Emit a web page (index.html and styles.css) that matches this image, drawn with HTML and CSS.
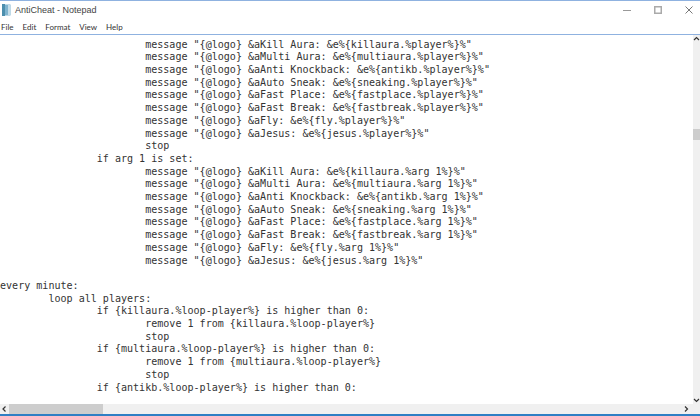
FILE: index.html
```html
<!DOCTYPE html>
<html lang="en">
<head>
<meta charset="utf-8">
<title>AntiCheat - Notepad</title>
<link rel="stylesheet" href="styles.css">
</head>
<body>
<div class="window">
  <header class="titlebar">
    <svg class="app-icon" width="9" height="12" viewBox="0 0 9 12"><rect x="0.5" y="0.5" width="8" height="11" fill="#7fb4cf"/><rect x="0" y="0" width="3" height="12" fill="#4d8fae"/><rect x="6" y="1" width="2" height="10" fill="#c4dde9"/></svg>
    <span class="title">AntiCheat - Notepad</span>
    <div class="controls">
      <svg width="8" height="8" viewBox="0 0 8 8"><path d="M0 4.5h8" stroke="#999" fill="none"/></svg>
      <svg width="8" height="8" viewBox="0 0 8 8"><rect x="0.75" y="0.75" width="6.5" height="6.5" stroke="#aaa" stroke-width="1.5" fill="none"/></svg>
      <svg width="8" height="8" viewBox="0 0 8 8"><path d="M0.5 0.5l7 7M7.5 0.5l-7 7" stroke="#777" fill="none"/></svg>
    </div>
  </header>
  <nav class="menubar"><span>File</span><span>Edit</span><span>Format</span><span>View</span><span>Help</span></nav>
  <main class="body">
    <div class="editor">
<pre class="text">			message "{@logo} &amp;aKill Aura: &amp;e%{killaura.%player%}%"
			message "{@logo} &amp;aMulti Aura: &amp;e%{multiaura.%player%}%"
			message "{@logo} &amp;aAnti Knockback: &amp;e%{antikb.%player%}%"
			message "{@logo} &amp;aAuto Sneak: &amp;e%{sneaking.%player%}%"
			message "{@logo} &amp;aFast Place: &amp;e%{fastplace.%player%}%"
			message "{@logo} &amp;aFast Break: &amp;e%{fastbreak.%player%}%"
			message "{@logo} &amp;aFly: &amp;e%{fly.%player%}%"
			message "{@logo} &amp;aJesus: &amp;e%{jesus.%player%}%"
			stop
		if arg 1 is set:
			message "{@logo} &amp;aKill Aura: &amp;e%{killaura.%arg 1%}%"
			message "{@logo} &amp;aMulti Aura: &amp;e%{multiaura.%arg 1%}%"
			message "{@logo} &amp;aAnti Knockback: &amp;e%{antikb.%arg 1%}%"
			message "{@logo} &amp;aAuto Sneak: &amp;e%{sneaking.%arg 1%}%"
			message "{@logo} &amp;aFast Place: &amp;e%{fastplace.%arg 1%}%"
			message "{@logo} &amp;aFast Break: &amp;e%{fastbreak.%arg 1%}%"
			message "{@logo} &amp;aFly: &amp;e%{fly.%arg 1%}%"
			message "{@logo} &amp;aJesus: &amp;e%{jesus.%arg 1%}%"

every minute:
	loop all players:
		if {killaura.%loop-player%} is higher than 0:
			remove 1 from {killaura.%loop-player%}
			stop
		if {multiaura.%loop-player%} is higher than 0:
			remove 1 from {multiaura.%loop-player%}
			stop
		if {antikb.%loop-player%} is higher than 0:</pre>
    </div>
    <div class="vscroll">
      <svg class="arrow" width="7" height="8" viewBox="0 0 7 8"><path d="M1 5l2.5-2.5L6 5" stroke="#333" stroke-width="1.2" fill="none"/></svg>
      <div class="vthumb"></div>
      <svg class="arrow arrow-end" width="7" height="8" viewBox="0 0 7 8"><path d="M1 3l2.5 2.5L6 3" stroke="#333" stroke-width="1.2" fill="none"/></svg>
    </div>
  </main>
  <div class="hscroll">
    <svg class="harrow" width="9" height="10" viewBox="0 0 9 10"><path d="M5.5 2.5L3 5l2.5 2.5" stroke="#333" stroke-width="1.2" fill="none"/></svg>
    <div class="hthumb"></div>
    <svg class="harrow harrow-end" width="9" height="10" viewBox="0 0 9 10"><path d="M3 2.5L5.5 5 3 7.5" stroke="#333" stroke-width="1.2" fill="none"/></svg>
    <div class="corner"></div>
  </div>
</div>
</body>
</html>
```

FILE: styles.css
```css
html, body {
  margin: 0;
  padding: 0;
  background: #fff;
}
.window {
  width: 700px;
  height: 416px;
  display: flex;
  flex-direction: column;
  overflow: hidden;
  border-top: 1px solid #8fb2e0;
  border-bottom: 2px solid #2f7fc4;
  box-sizing: border-box;
  font-family: "Lato", "Liberation Sans", sans-serif;
  color: #333;
}
.titlebar {
  height: 18px;
  flex: none;
  display: flex;
  align-items: center;
  padding-left: 2px;
  gap: 4px;
}
.title {
  font-family: "Liberation Sans", sans-serif;
  font-size: 9px;
  color: #444;
}
.controls {
  margin-left: auto;
  display: flex;
  gap: 23px;
  padding-right: 7px;
}
.menubar {
  height: 15px;
  flex: none;
  display: flex;
  align-items: center;
  gap: 9px;
  padding-left: 1px;
  font-size: 8px;
  color: #333;
  border-bottom: 1px solid #8fb2e0;
}
.body {
  flex: 1;
  min-height: 0;
  display: flex;
}
.editor {
  flex: 1;
  min-width: 0;
  overflow: hidden;
}
.text {
  margin: 0;
  padding: 3.6px 0 0 0;
  font-family: "DejaVu Sans Mono", "Liberation Mono", monospace;
  font-size: 10.05px;
  line-height: 12.7px;
  tab-size: 8;
  color: #333;
  white-space: pre;
}
.vscroll {
  width: 7px;
  flex: none;
  background: #f0f0f0;
  display: flex;
  flex-direction: column;
  align-items: center;
}
.arrow {
  flex: none;
}
.arrow-end {
  margin-top: auto;
}
.vthumb {
  width: 7px;
  height: 11px;
  margin-top: 86px;
  background: #cdcdcd;
}
.hscroll {
  height: 10px;
  flex: none;
  background: #f0f0f0;
  display: flex;
  align-items: center;
}
.harrow {
  flex: none;
}
.hthumb {
  width: 94px;
  height: 10px;
  background: #cdcdcd;
}
.harrow-end {
  margin-left: auto;
}
.corner {
  width: 9px;
  height: 10px;
  flex: none;
}
```
